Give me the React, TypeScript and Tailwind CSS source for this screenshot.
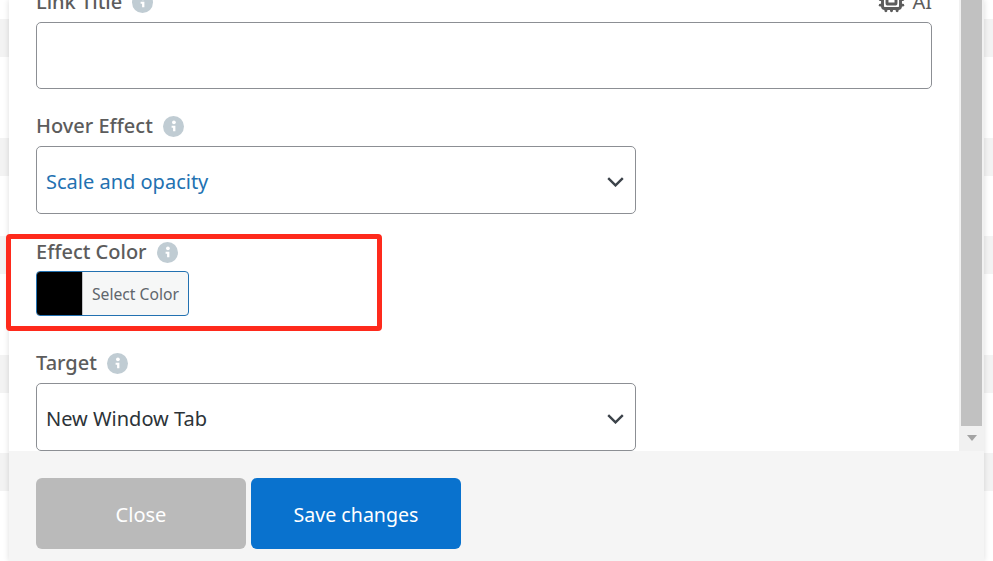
import { Cpu } from 'lucide-react';

const font = { fontFamily: '"Noto Sans", sans-serif' };

function InfoIcon() {
  return (
    <svg width="21" height="21" viewBox="0 0 20 20" className="shrink-0">
      <circle cx="10" cy="10" r="10" fill="#c0ccd3" />
      <circle cx="10.4" cy="6" r="1.8" fill="#fff" />
      <path d="M8.2 9.4h3.6v5.2H9.6v-3.3H8.2z" fill="#fff" />
    </svg>
  );
}

function Label({ text, className }: { text: string; className?: string }) {
  return (
    <div className={`flex h-7 items-center gap-[10px] text-[20px] font-medium leading-7 text-[#5c5c5c] ${className ?? ''}`}>
      <span>{text}</span>
      <InfoIcon />
    </div>
  );
}

function SelectBox({ value, color }: { value: string; color: string }) {
  return (
    <div className={`flex h-[68px] w-[600px] items-center justify-between rounded-[5px] border border-[#8c8f94] bg-white pl-[9px] pr-[11px] text-[20px] ${color}`}>
      <span className="pt-[3px]">{value}</span>
      <svg width="17" height="10" viewBox="0 0 17 10" fill="none" className="mt-[3px] text-[#3c434a]">
        <path d="M1.2 1.2 8.5 8.4l7.3-7.2" stroke="currentColor" strokeWidth="2.4" />
      </svg>
    </div>
  );
}

// strips of the page behind the modal
function Backdrop({ width }: { width: string }) {
  return (
    <div className={`flex shrink-0 flex-col ${width}`}>
      <div className="mt-[19px] h-[38px] bg-[#f3f3f3]" />
      <div className="mt-[81px] h-[38px] bg-[#f3f3f3]" />
      <div className="mt-[60px] h-[38px] bg-[#f3f3f3]" />
      <div className="mt-[81px] h-[38px] bg-[#f3f3f3]" />
      <div className="mt-[60px] h-[38px] bg-[#f3f3f3]" />
    </div>
  );
}

export default function App() {
  return (
    <div className="relative flex h-[561px] w-[993px] overflow-hidden bg-white" style={font}>
      <Backdrop width="w-[9px]" />

      <div className="z-10 flex w-[975px] shrink-0 flex-col bg-white shadow-[0_0_6px_rgba(0,0,0,0.14)]">
        <div className="flex h-[451px] overflow-hidden">
          <div className="flex-1 pl-[27px] pr-[27px]">
            <div className="-mt-[12px] flex h-[34px] items-start justify-between">
              <Label text="Link Title" />
              <div className="flex items-center gap-[7px] text-[20px] leading-7 text-[#5c5c5c]">
                <Cpu size={27} strokeWidth={2.6} className="-mt-[5px]" />
                <span>AI</span>
              </div>
            </div>
            <div className="h-[67px] rounded-[5px] border border-[#8c8f94] bg-white" />
            <Label text="Hover Effect" className="mb-[6px] mt-[23px]" />
            <SelectBox value="Scale and opacity" color="text-[#2271b1]" />
            <Label text="Effect Color" className="mb-[5px] mt-[24px]" />
            <div className="flex h-[45px] w-[153px] overflow-hidden rounded-[4px] border border-[#2271b1] bg-[#f6f7f7]">
              <div className="w-[45px] bg-black" />
              <div className="flex flex-1 items-center justify-center border-l border-[#c3c4c7] pt-[3px] text-[15.7px] text-[#5f666c]">
                Select Color
              </div>
            </div>
            <Label text="Target" className="mb-[6px] mt-[33px]" />
            <SelectBox value="New Window Tab" color="text-[#2c3338]" />
          </div>

          <div className="flex w-[25px] shrink-0 flex-col bg-[#f1f1f1] px-[2px]">
            <div className="h-[426px] bg-[#c1c1c1]" />
            <div className="flex flex-1 justify-center pt-[9px]">
              <div className="h-0 w-0 border-x-[5.5px] border-t-[6px] border-x-transparent border-t-[#a3a3a3]" />
            </div>
          </div>
        </div>

        <div className="flex flex-1 gap-[5px] bg-[#f5f5f5] pl-[27px] pt-[27px]">
          <button className="h-[71px] w-[210px] rounded-[6px] bg-[#bababa] pt-[2px] text-[20px] text-white">Close</button>
          <button className="h-[71px] w-[210px] rounded-[6px] bg-[#0972ce] pt-[2px] text-[19.6px] text-white">Save changes</button>
        </div>
      </div>

      <Backdrop width="w-[9px]" />

      {/* red annotation drawn over the screenshot */}
      <div className="absolute left-[6px] top-[234px] z-20 h-[97px] w-[376px] rounded-[4px] border-[5px] border-[#fe2a1c]" />
    </div>
  );
}
